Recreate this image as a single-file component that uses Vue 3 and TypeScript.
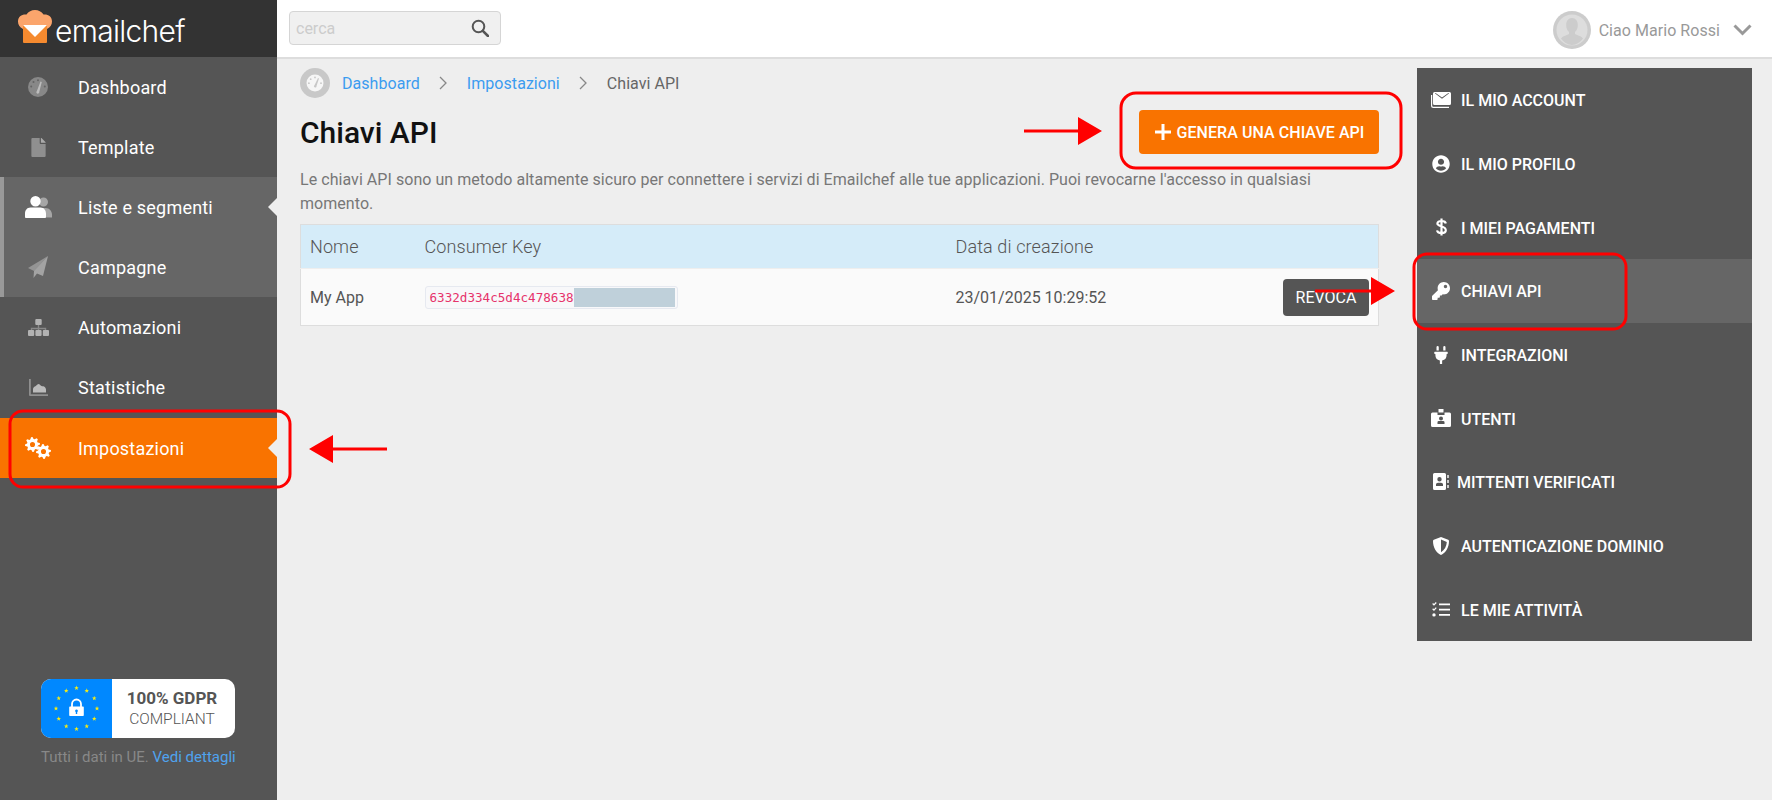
<script setup lang="ts">
interface Part { d: string; o?: number; sw?: number; c?: string }
interface Item { label: string; vb: string; w: number; h: number; parts: Part[]; cls?: string; tight?: boolean }

function gear(cx: number, cy: number, r: number): string {
  const teeth = 8
  const pts: string[] = []
  for (let i = 0; i < teeth * 4; i++) {
    const a = (i / (teeth * 4)) * Math.PI * 2 - Math.PI / 16
    const rr = i % 4 < 2 ? r : r * 0.74
    pts.push(`${(cx + rr * Math.cos(a)).toFixed(2)} ${(cy + rr * Math.sin(a)).toFixed(2)}`)
  }
  const h = r * 0.34
  return `M${pts.join('L')}Z M${cx - h} ${cy}a${h} ${h} 0 1 0 ${h * 2} 0a${h} ${h} 0 1 0 ${-h * 2} 0Z`
}

const nav: Item[] = [
  { label: 'Dashboard', vb: '0 0 20 20', w: 20, h: 20, parts: [
    { d: 'M10 0a10 10 0 1 1 0 20a10 10 0 0 1 0-20Z', o: 0.3 },
    { d: 'M10 2.200a1 1 0 1 0 0 2a1 1 0 0 0 0-2ZM5.500 4a1 1 0 1 0 0 2a1 1 0 0 0 0-2ZM3.200 8.500a1 1 0 1 0 0 2a1 1 0 0 0 0-2ZM16.800 8.500a1 1 0 1 0 0 2a1 1 0 0 0 0-2Z', c: '#555', o: 0.7 },
    { d: 'M12.500 4.500L13.800 5 11.300 14.800a1.500 1.500 0 1 1-2.400-.8Z', o: 0.45 }
  ] },
  { label: 'Template', vb: '0 0 384 512', w: 15, h: 19, parts: [
    { d: 'M224 136V0H24C10.700 0 0 10.700 0 24v464c0 13.300 10.700 24 24 24h336c13.300 0 24-10.700 24-24V160H248c-13.200 0-24-10.800-24-24z', o: 0.34 },
    { d: 'M384 121.900v6.100H256V0h6.100c6.400 0 12.500 2.500 17 7l97.900 98c4.500 4.500 7 10.600 7 16.900z', o: 0.5 }
  ] },
  { label: 'Liste e segmenti', vb: '0 0 27 22', w: 27, h: 22, cls: 'group', parts: [
    { d: 'M18.500 1.500a4.500 4.500 0 1 1 0 9a4.500 4.500 0 0 1 0-9ZM17 12h3.500c3.600 0 6.500 2.900 6.500 6.500V21.500H17Z', o: 0.42 },
    { d: 'M10.500 0a5.200 5.200 0 1 1 0 10.400a5.200 5.200 0 0 1 0-10.400ZM5.500 11.500h10c3.600 0 5.500 3 5.500 6V21c0 .500-.5 1-1 1H1c-.5 0-1-.5-1-1v-3.500c0-3 1.900-6 5.500-6Z' }
  ] },
  { label: 'Campagne', vb: '0 0 20 22', w: 20, h: 22, cls: 'group', parts: [
    { d: 'M20 0L0 12l6 3Z', o: 0.3 },
    { d: 'M20 0L6 15l-.5 7 3.500-4.500 6 2.500Z', o: 0.4 }
  ] },
  { label: 'Automazioni', vb: '0 0 21 17', w: 21, h: 17, parts: [
    { d: 'M9.800 6h1.400v2.800h7V11h-1.400V10.200H11.200V11H9.800V10.200H4.200V11H2.800V8.800h7Z', o: 0.3 },
    { d: 'M8.300 0h4.400a1 1 0 0 1 1 1v4a1 1 0 0 1-1 1H8.300a1 1 0 0 1-1-1V1a1 1 0 0 1 1-1ZM1 11h4.200a1 1 0 0 1 1 1v4a1 1 0 0 1-1 1H1a1 1 0 0 1-1-1V12a1 1 0 0 1 1-1ZM8.400 11h4.200a1 1 0 0 1 1 1v4a1 1 0 0 1-1 1H8.400a1 1 0 0 1-1-1V12a1 1 0 0 1 1-1ZM15.800 11H20a1 1 0 0 1 1 1v4a1 1 0 0 1-1 1h-4.200a1 1 0 0 1-1-1V12a1 1 0 0 1 1-1Z', o: 0.55 }
  ] },
  { label: 'Statistiche', vb: '0 0 19 17', w: 19, h: 17, parts: [
    { d: 'M0 0h1.800v15.200H19V17H1a1 1 0 0 1-1-1Z', o: 0.34 },
    { d: 'M4 13.500V10c0-1 1-2.500 2-2.500S8 5 9.500 5c1.200 0 1.800 1.500 3 2 1 .4 1.500 0 2.500.5s2 2 2 3v3Z', o: 0.6 }
  ] },
  { label: 'Impostazioni', vb: '0 0 26 22', w: 26, h: 22, cls: 'active', parts: [
    { d: gear(7.5, 7.5, 7.5) },
    { d: gear(18.5, 14.5, 7.5) }
  ] }
]

const side: Item[] = [
  { label: 'Il mio account', vb: '0 0 20 16', w: 20, h: 16, parts: [
    { d: 'M3.500 0h15A1.500 1.500 0 0 1 20 1.500v10a1.500 1.500 0 0 1-1.500 1.500h-15A1.500 1.500 0 0 1 2 11.500v-10A1.500 1.500 0 0 1 3.500 0ZM3.800 1.200L11 6.800l7.200-5.600-.8-.2L11 5.600 4.600 1Z' },
    { d: 'M0 3h1.200v10.500c0 .7.600 1.300 1.300 1.300H18V16H2.500A2.500 2.500 0 0 1 0 13.500Z' }
  ] },
  { label: 'Il mio profilo', vb: '0 0 496 512', w: 18, h: 18, parts: [
    { d: 'M248 8C111 8 0 119 0 256s111 248 248 248 248-111 248-248S385 8 248 8zm0 96c48.600 0 88 39.400 88 88s-39.400 88-88 88-88-39.400-88-88 39.400-88 88-88zm0 344c-58.700 0-111.300-26.600-146.500-68.200 18.800-35.400 55.600-59.800 98.500-59.800 2.400 0 4.800.4 7.100 1.100 13 4.200 26.600 6.900 40.900 6.900 14.300 0 28-2.700 40.900-6.900 2.300-.7 4.700-1.100 7.100-1.100 42.900 0 79.700 24.400 98.500 59.800C359.300 421.400 306.700 448 248 448z' }
  ] },
  { label: 'I miei pagamenti', vb: '0 0 11 18', w: 11, h: 18, parts: [
    { d: 'M9.800 5.500C9.600 3.800 8 3 5.500 3 3 3 1.400 3.900 1.400 5.600 1.400 9 9.800 7.500 9.800 12.200 9.800 14 8 15 5.500 15 3 15 1.300 14 1.100 12.300M5.500 .5V17.500', sw: 2.2 }
  ] },
  { label: 'Chiavi API', vb: '0 0 512 512', w: 18, h: 18, cls: 'active', parts: [
    { d: 'M512 176.001C512 273.203 433.202 352 336 352c-11.220 0-22.190-1.062-32.827-3.069l-24.012 27.014A23.999 23.999 0 0 1 261.223 384H224v40c0 13.255-10.745 24-24 24h-40v40c0 13.255-10.745 24-24 24H24c-13.255 0-24-10.745-24-24v-78.059c0-6.365 2.529-12.470 7.029-16.971l161.802-161.802C163.108 213.814 160 195.271 160 176 160 78.798 238.797.001 335.999 0 433.488-.001 512 78.511 512 176.001zM336 128c0 26.510 21.490 48 48 48s48-21.490 48-48-21.490-48-48-48-48 21.490-48 48z' }
  ] },
  { label: 'Integrazioni', vb: '0 0 384 512', w: 14, h: 18, parts: [
    { d: 'M320 32a32 32 0 0 0-64 0v96h64Zm48 128H16A16 16 0 0 0 0 176v32a16 16 0 0 0 16 16H32v32A160.070 160.070 0 0 0 160 412.800V512h64V412.800A160.070 160.070 0 0 0 352 256V224h16a16 16 0 0 0 16-16V176A16 16 0 0 0 368 160ZM128 32a32 32 0 0 0-64 0v96h64Z' }
  ] },
  { label: 'Utenti', vb: '0 0 20 18', w: 20, h: 18, parts: [
    { d: 'M7.500 0h5v3.500h-5ZM1.500 3.500H6.500V6h7V3.500h5A1.500 1.500 0 0 1 20 5v11.500a1.500 1.500 0 0 1-1.500 1.500H1.500A1.500 1.500 0 0 1 0 16.500V5a1.500 1.500 0 0 1 1.500-1.500ZM10 7.500a2 2 0 1 0 0 4a2 2 0 0 0 0-4ZM6.500 13v2h7v-2c0-.8-1-1-1.500-1h-4c-.5 0-1.500.2-1.500 1Z' }
  ] },
  { label: 'Mittenti verificati', vb: '0 0 16 17', w: 16, h: 17, tight: true, parts: [
    { d: 'M1.500 0h10A1.500 1.500 0 0 1 13 1.500v14a1.500 1.500 0 0 1-1.500 1.500h-10A1.500 1.500 0 0 1 0 15.500v-14A1.500 1.500 0 0 1 1.500 0ZM6.500 4a2.200 2.200 0 1 0 0 4.400a2.200 2.200 0 0 0 0-4.400ZM3 11.500v1.500h7v-1.500c0-1-1-1.800-2-1.800H5c-1 0-2 .8-2 1.800Z' },
    { d: 'M14 2h2v3h-2ZM14 7h2v3h-2ZM14 12h2v3h-2Z', o: 0.7 }
  ] },
  { label: 'Autenticazione dominio', vb: '0 0 16 18', w: 16, h: 18, parts: [
    { d: 'M8 0l7.200 2.800c.5.2.8.6.8 1.100C16 10 13 15.500 8 18 3 15.500 0 10 0 3.900c0-.5.3-.9.800-1.100ZM8 2.500v12.800c3.500-2 5.600-6 5.800-10.200Z' }
  ] },
  { label: 'Le mie attività', vb: '0 0 18 15', w: 18, h: 15, parts: [
    { d: 'M7 1.500h11v1.700H7ZM7 6.700h11v1.700H7ZM7 12h11v1.700H7ZM.2 2l.9-.9.9.9L3.800 0l.9.9L2 3.800ZM.2 7.200l.9-.9.9.9L3.800 5.200l.9.9L2 9ZM2 11.200a1.700 1.700 0 1 1 0 3.400a1.700 1.700 0 0 1 0-3.400Z' }
  ] }
]

const stars = Array.from({ length: 12 }, (_, i) => {
  const a = (i / 12) * Math.PI * 2
  const cx = 35.5 + 20.5 * Math.cos(a)
  const cy = 29.5 + 20.5 * Math.sin(a)
  const pts: string[] = []
  for (let k = 0; k < 10; k++) {
    const t = (k / 10) * Math.PI * 2 - Math.PI / 2
    const r = k % 2 === 0 ? 2.4 : 1
    pts.push(`${(cx + r * Math.cos(t)).toFixed(2)},${(cy + r * Math.sin(t)).toFixed(2)}`)
  }
  return pts.join(' ')
})
</script>

<template>
  <div class="page">
    <aside class="sidebar">
      <div class="brand">
        <svg class="hat" viewBox="0 0 34 34" width="34" height="34" aria-hidden="true">
          <path d="M5 21V19C1.500 17 0 14.500 0 11.500 0 6.500 4 4 8.500 4.500 10.500 1.500 13.500 0 17 0s6.500 1.500 8.500 4.500C30 4 34 6.500 34 11.500c0 3-1.500 5.500-5 7.500v2Z" fill="#fba56c" />
          <path d="M5 15h24v17a1 1 0 0 1-1 1H6a1 1 0 0 1-1-1Z" fill="#f58a2f" />
          <path d="M5 15h24L17 27Z" fill="#fff" />
        </svg>
        <span class="wordmark">emailchef</span>
      </div>
      <nav class="nav">
        <a v-for="it in nav" :key="it.label" class="nav-item" :class="it.cls">
          <span class="nav-icon">
            <svg :viewBox="it.vb" :width="it.w" :height="it.h" aria-hidden="true">
              <path v-for="(p, i) in it.parts" :key="i" :d="p.d" :fill="p.c ?? '#fff'" fill-rule="evenodd" :opacity="p.o ?? 1" />
            </svg>
          </span>
          <span>{{ it.label }}</span>
        </a>
      </nav>
      <div class="gdpr">
        <div class="badge">
          <div class="badge-blue">
            <svg viewBox="0 0 71 59" width="71" height="59" aria-hidden="true">
              <polygon v-for="(s, i) in stars" :key="i" :points="s" fill="#f7ec13" />
              <path d="M31 28v-3a4.500 4.500 0 0 1 9 0v3" fill="none" stroke="#fff" stroke-width="1.800" />
              <path d="M29 27.500h13a.8.8 0 0 1 .8.8v8a.8.8 0 0 1-.8.8H29a.8.8 0 0 1-.8-.8v-8a.8.8 0 0 1 .8-.8ZM35.500 30.500a1.400 1.400 0 0 0-.7 2.600V35h1.400v-1.900a1.400 1.400 0 0 0-.7-2.600Z" fill="#fff" fill-rule="evenodd" />
            </svg>
          </div>
          <div class="badge-text">
            <strong>100% GDPR</strong>
            <span>COMPLIANT</span>
          </div>
        </div>
        <p class="gdpr-note">Tutti i dati in UE. <a>Vedi dettagli</a></p>
      </div>
    </aside>

    <div class="main">
      <header class="topbar">
        <div class="search">
          <span class="search-ph">cerca</span>
          <svg viewBox="0 0 18 18" width="18" height="18" aria-hidden="true">
            <circle cx="7.500" cy="7.500" r="5.800" fill="none" stroke="#555" stroke-width="2" />
            <path d="M11.800 11.800L17 17" stroke="#555" stroke-width="2.600" stroke-linecap="round" />
          </svg>
        </div>
        <div class="user">
          <span class="avatar">
            <svg viewBox="0 0 38 38" width="38" height="38" aria-hidden="true">
              <circle cx="19" cy="19" r="19" fill="#ccc" />
              <circle cx="19" cy="19" r="15.500" fill="#ddd" />
              <path d="M19 7c3.600 0 5.800 3 5.800 7 0 3-1 5.500-2.800 7v2c2.500 1.500 6.500 2 8 4.500C27.500 31 23.500 34 19 34s-8.500-3-11-6.500c1.500-2.500 5.500-3 8-4.500v-2c-1.800-1.500-2.800-4-2.800-7 0-4 2.200-7 5.800-7Z" fill="#ccc" />
            </svg>
          </span>
          <span class="user-name">Ciao Mario Rossi</span>
          <svg viewBox="0 0 19 12" width="19" height="12" aria-hidden="true">
            <path d="M1.500 1.500L9.500 9.500l8-8" fill="none" stroke="#999" stroke-width="3" />
          </svg>
        </div>
      </header>

      <div class="body">
        <section class="content">
          <div class="crumbs">
            <span class="crumb-icon">
              <svg viewBox="0 0 30 30" width="30" height="30" aria-hidden="true">
                <circle cx="15" cy="15" r="15" fill="#c8c8c8" />
                <circle cx="15" cy="15" r="8.500" fill="#f6f6f6" />
                <path d="M15 8.500a.9.900 0 1 0 0 1.800a.9.900 0 0 0 0-1.800ZM10.700 10.300a.9.900 0 1 0 0 1.800a.9.900 0 0 0 0-1.800ZM8.900 14.300a.9.900 0 1 0 0 1.800a.9.900 0 0 0 0-1.800ZM21 14.300a.9.900 0 1 0 0 1.800a.9.900 0 0 0 0-1.800Z" fill="#c8c8c8" />
                <path d="M18 10l1 .4-2.500 7.600a1.300 1.300 0 1 1-2-.8Z" fill="#c8c8c8" />
              </svg>
            </span>
            <a>Dashboard</a>
            <svg class="sep" viewBox="0 0 9 14" width="9" height="14" aria-hidden="true"><path d="M1 1l6 6-6 6" fill="none" stroke="#888" stroke-width="1.300" /></svg>
            <a>Impostazioni</a>
            <svg class="sep" viewBox="0 0 9 14" width="9" height="14" aria-hidden="true"><path d="M1 1l6 6-6 6" fill="none" stroke="#888" stroke-width="1.300" /></svg>
            <span class="crumb-cur">Chiavi API</span>
          </div>

          <div class="title-row">
            <h1>Chiavi API</h1>
            <button class="btn-add" type="button">
              <svg viewBox="0 0 18 18" width="18" height="18" aria-hidden="true"><path d="M9 1v16M1 9h16" stroke="#fff" stroke-width="3" /></svg>
              GENERA UNA CHIAVE API
            </button>
          </div>

          <p class="intro">Le chiavi API sono un metodo altamente sicuro per connettere i servizi di Emailchef alle tue applicazioni. Puoi revocarne l'accesso in qualsiasi momento.</p>

          <table class="keys">
            <colgroup>
              <col class="c1" />
              <col class="c2" />
              <col />
            </colgroup>
            <thead>
              <tr><th>Nome</th><th>Consumer Key</th><th>Data di creazione</th></tr>
            </thead>
            <tbody>
              <tr>
                <td>My App</td>
                <td>
                  <span class="code"><code>6332d334c5d4c478638</code><i class="mask"></i></span>
                </td>
                <td>
                  <div class="date-cell">
                    <span>23/01/2025 10:29:52</span>
                    <button class="btn-revoke" type="button">REVOCA</button>
                  </div>
                </td>
              </tr>
            </tbody>
          </table>
        </section>

        <aside class="panel">
          <a v-for="it in side" :key="it.label" class="panel-item" :class="[it.cls, { tight: it.tight }]">
            <span class="panel-icon">
              <svg :viewBox="it.vb" :width="it.w" :height="it.h" aria-hidden="true">
                <template v-for="(p, i) in it.parts" :key="i">
                  <path v-if="p.sw" :d="p.d" fill="none" stroke="#fff" :stroke-width="p.sw" />
                  <path v-else :d="p.d" fill="#fff" fill-rule="evenodd" :opacity="p.o ?? 1" />
                </template>
              </svg>
            </span>
            <span class="panel-label">{{ it.label }}</span>
          </a>
        </aside>
      </div>
    </div>

    <svg class="marks" viewBox="0 0 1772 800" width="1772" height="800" aria-hidden="true">
      <g fill="none" stroke="#f00" stroke-width="3">
        <rect x="10" y="411" width="280" height="76" rx="13" />
        <rect x="1121" y="93" width="280" height="75" rx="15" />
        <rect x="1414" y="254" width="212" height="75" rx="13" />
      </g>
      <g fill="#f00">
        <path d="M309 449l24-14v12.500h54v3h-54V463Z" />
        <path d="M1102 131l-24-14v12.500h-54v3h54V145Z" />
        <path d="M1395 291l-24-14v12.500h-56v3h56V305Z" />
      </g>
    </svg>
  </div>
</template>

<style>
html, body { margin: 0; padding: 0; background: #eee; }
</style>

<style scoped>
.page {
  position: relative;
  display: flex;
  width: 1772px;
  height: 800px;
  overflow: hidden;
  background: #eee;
  font-family: Roboto, "Liberation Sans", sans-serif;
  color: #555;
}
.sidebar {
  width: 277px;
  flex: none;
  display: flex;
  flex-direction: column;
  background: #555;
}
.brand {
  height: 57px;
  background: #333;
  display: flex;
  align-items: flex-start;
  padding: 10px 0 0 18px;
  box-sizing: border-box;
}
.hat { flex: none; }
.wordmark {
  margin-left: 3px;
  margin-top: 1px;
  font-family: Inter, sans-serif;
  font-weight: 300;
  font-size: 30px;
  line-height: 40px;
  color: #fff;
  letter-spacing: -0.7px;
}
.nav { display: flex; flex-direction: column; }
.nav-item {
  position: relative;
  height: 60px;
  display: flex;
  align-items: center;
  padding-left: 24px;
  color: #fff;
  font-size: 18px;
  letter-spacing: 0.2px;
}
.nav-item.group { background: #666; box-shadow: inset 4px 0 0 #999; }
.nav-item.active { background: #f97300; margin-top: 1px; }
.nav-item.group:nth-child(3)::after,
.nav-item.active::after {
  content: "";
  position: absolute;
  right: 0;
  top: 50%;
  margin-top: -9px;
  border-style: solid;
  border-width: 9px 9px 9px 0;
  border-color: transparent #eee transparent transparent;
}
.nav-icon {
  width: 28px;
  margin-right: 26px;
  display: flex;
  justify-content: center;
  flex: none;
}
.gdpr {
  margin-top: auto;
  padding: 0 0 33px 41px;
}
.badge {
  display: flex;
  width: 194px;
  height: 59px;
  border-radius: 10px;
  overflow: hidden;
  background: #fff;
}
.badge-blue { width: 71px; background: #0088ff; flex: none; }
.badge-text {
  flex: 1;
  display: flex;
  flex-direction: column;
  align-items: center;
  justify-content: center;
  padding-right: 3px;
  color: #555;
  line-height: 21px;
}
.badge-text strong { font-weight: 700; font-size: 17px; }
.badge-text span { font-weight: 300; font-size: 15.5px; }
.gdpr-note {
  margin: 9px 0 0;
  width: 194px;
  font-size: 15px;
  line-height: 20px;
  color: #888;
  white-space: nowrap;
}
.gdpr-note a { color: #4fa3ee; }
.main {
  flex: 1;
  display: flex;
  flex-direction: column;
  min-width: 0;
}
.topbar {
  height: 59px;
  box-sizing: border-box;
  background: #fff;
  border-bottom: 2px solid #ddd;
  display: flex;
  align-items: flex-start;
  justify-content: space-between;
  padding: 11px 20px 0 12px;
}
.search {
  width: 212px;
  height: 34px;
  box-sizing: border-box;
  border: 1px solid #d5d5d5;
  border-radius: 4px;
  background: #f0f0f0;
  display: flex;
  align-items: center;
  justify-content: space-between;
  padding: 0 11px 0 6px;
}
.search-ph { font-size: 16px; color: #ccc; }
.user { display: flex; align-items: center; height: 38px; }
.avatar { display: flex; margin-right: 8px; }
.user-name { font-size: 16px; color: #999; margin-right: 13px; letter-spacing: 0.05px; }
.body {
  flex: 1;
  display: flex;
  min-height: 0;
  padding: 9px 20px 0 23px;
  gap: 38px;
}
.content { flex: 1; min-width: 0; }
.crumbs {
  display: flex;
  align-items: center;
  height: 30px;
  font-size: 16px;
  letter-spacing: 0.05px;
}
.crumbs a { color: #3b9cf0; }
.crumb-icon { display: flex; margin-right: 12px; }
.crumb-cur { color: #666; }
.sep { margin: 0 19px; }
.title-row {
  display: flex;
  align-items: center;
  justify-content: space-between;
  height: 44px;
  margin-top: 12px;
}
h1 {
  margin: 0;
  position: relative;
  top: 1px;
  font-size: 30px;
  font-weight: 500;
  color: #111;
  line-height: 44px;
}
.btn-add {
  width: 240px;
  height: 44px;
  border: 0;
  border-radius: 4px;
  background: #f97300;
  color: #fff;
  font-family: inherit;
  font-size: 16px;
  font-weight: 500;
  letter-spacing: 0.06px;
  display: flex;
  align-items: center;
  justify-content: center;
  gap: 5px;
  padding: 0;
  white-space: nowrap;
}
.intro {
  margin: 14px 0 0;
  font-size: 16px;
  line-height: 24px;
  color: #777;
  letter-spacing: 0.05px;
}
.keys {
  margin-top: 8px;
  width: 100%;
  border-collapse: collapse;
  table-layout: fixed;
  border: 1px solid #ddd;
  font-size: 16px;
}
.c1 { width: 115px; }
.c2 { width: 531px; }
.keys th {
  height: 43px;
  padding: 0 9px;
  text-align: left;
  background: #d5ecf9;
  font-size: 18px;
  font-weight: 300;
  letter-spacing: 0.12px;
  color: #555;
  border-bottom: 1px solid #eee;
}
.keys td {
  height: 56px;
  padding: 0 9px;
  background: #fafafa;
  color: #555;
}
.code {
  display: inline-flex;
  align-items: center;
  height: 23px;
  box-sizing: border-box;
  padding: 0 2px 0 4px;
  border: 1px solid #e6e9f0;
  border-radius: 3px;
  background: #f8f8fa;
}
code {
  font-family: "DejaVu Sans Mono", monospace;
  font-size: 12.6px;
  color: #e6336b;
}
.mask { display: block; width: 101px; height: 19px; background: #bfd0da; }
.date-cell {
  display: flex;
  align-items: center;
  justify-content: space-between;
  font-size: 16px;
}
.btn-revoke {
  width: 86px;
  height: 37px;
  border: 0;
  border-radius: 4px;
  background: #555;
  color: #fff;
  font-family: inherit;
  font-size: 16px;
  padding: 0;
}
.panel {
  width: 335px;
  height: 573px;
  flex: none;
  background: #555;
  display: flex;
  flex-direction: column;
}
.panel-item {
  flex: 1;
  display: flex;
  align-items: center;
  padding-left: 14px;
  color: #fff;
  font-size: 16px;
  font-weight: 500;
}
.panel-item.active { background: #666; }
.panel-icon {
  width: 20px;
  margin-right: 10px;
  flex: none;
  display: flex;
  justify-content: center;
}
.panel-label { text-transform: uppercase; position: relative; top: 1px; }
.tight .panel-label { margin-left: -4px; }
.marks {
  position: absolute;
  left: 0;
  top: 0;
  pointer-events: none;
}
</style>
